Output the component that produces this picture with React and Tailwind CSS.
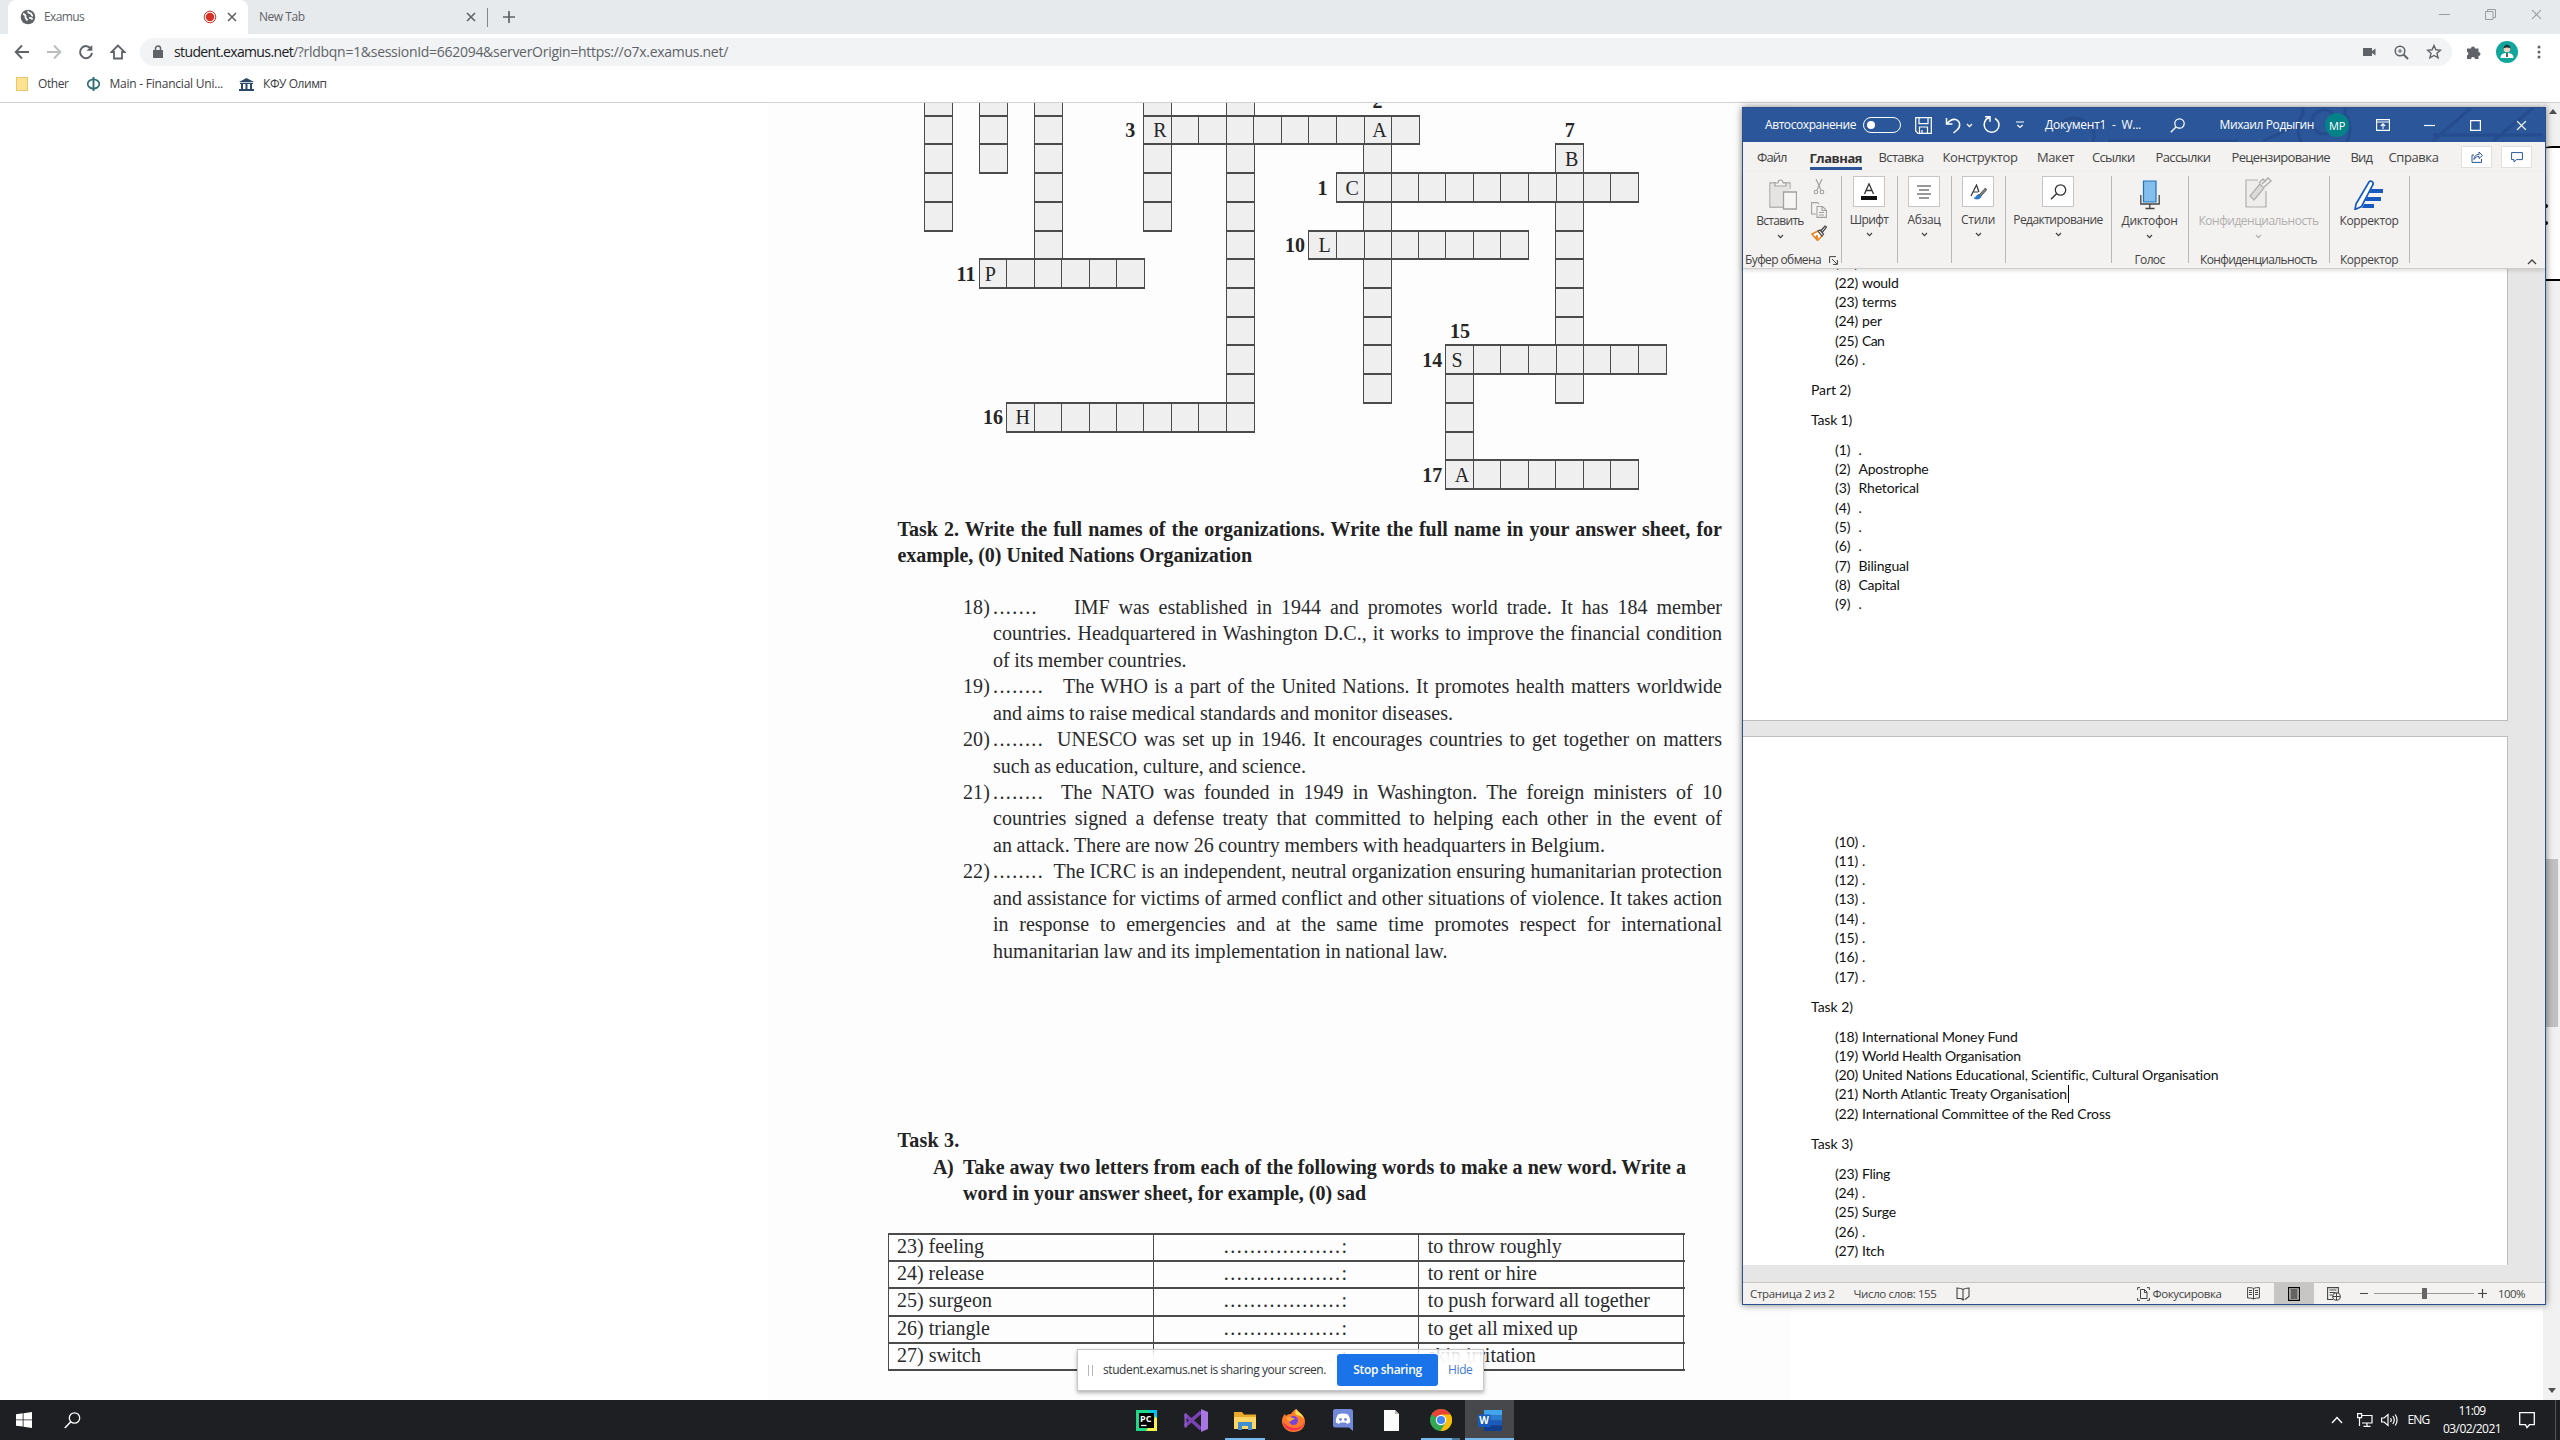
import { useLayoutEffect, useRef } from "react";

/* Text that is tracked in or out so that it fills exactly `w` pixels. */
function Fit({ w, className = "", children }) {
  const ref = useRef(null);
  useLayoutEffect(() => {
    const el = ref.current;
    el.style.letterSpacing = "0px";
    const natural = el.getBoundingClientRect().width;
    const n = Math.max(1, el.textContent.length);
    el.style.letterSpacing = (w - natural) / n + "px";
  }, [w, children]);
  return (
    <span className={"inline-block shrink-0 " + className} style={{ width: w }}>
      <span ref={ref} className="inline-block whitespace-pre">{children}</span>
    </span>
  );
}

function Svg({ w, h, vb, className = "", children }) {
  return (
    <svg width={w} height={h} viewBox={vb || `0 0 ${w} ${h}`} className={"block shrink-0 " + className} fill="none" stroke="currentColor">
      {children}
    </svg>
  );
}

const Close = ({ s = 10, className = "", sw = 1.6 }) => (
  <Svg w={s} h={s} vb="0 0 10 10" className={className}>
    <path d="M1 1 9 9M9 1 1 9" strokeWidth={sw} />
  </Svg>
);
const Caret = ({ className = "" }) => (
  <Svg w={7} h={5} className={className}>
    <path d="M1 1 3.5 3.7 6 1" strokeWidth="1.2" />
  </Svg>
);

/* ---------- browser ---------- */

function TabStrip() {
  return (
    <div className="flex h-[34px] bg-[#e7eaed] text-[12px] text-[#5f6368]">
      <div className="ml-2 flex h-full w-[240px] items-center rounded-t-lg bg-white">
        <Svg w={16} h={16} className="ml-[12px]">
          <circle cx="8" cy="8" r="7.3" fill="#5f6368" stroke="none" />
          <path d="M3 5c2 .3 3 1.500 2.500 3s1.500 1.500 1.800 3.500M8.500 2c-1 1.500.5 2.200 2 2.300s.5 2.500 2.500 2.500M9 9c2-.5 3 .5 3.500 1.500" stroke="#fff" strokeWidth="1.800" />
        </Svg>
        <Fit w={40} className="ml-[8px]">Examus</Fit>
        <Svg w={14} h={14} className="ml-[119px]">
          <circle cx="7" cy="7" r="5.800" stroke="#d93025" strokeWidth="1" />
          <circle cx="7" cy="7" r="4.200" fill="#d93025" stroke="none" />
        </Svg>
        <Close className="ml-[10px]" />
      </div>
      <div className="flex h-full w-[239px] items-center">
        <Fit w={45.500} className="ml-[11px]">New Tab</Fit>
        <Close className="ml-[161px]" />
      </div>
      <div className="mt-[8px] h-[19px] w-px bg-[#80868b]" />
      <Svg w={12} h={12} className="ml-[15px] mt-[11px]">
        <path d="M6 0v12M0 6h12" strokeWidth="1.700" />
      </Svg>
      <div className="ml-auto mr-[18px] flex items-center gap-[35px] pb-[6px] text-[#9a9da0]">
        <Svg w={11} h={11}><path d="M0 5.500h11" /></Svg>
        <Svg w={11} h={11}><path d="M.5 2.500h7.500v8h-7.500zM2.500 2.500v-2h8v8h-2.500" /></Svg>
        <Close s={11} sw={1} />
      </div>
    </div>
  );
}

function Toolbar() {
  return (
    <div className="flex h-[36px] items-center bg-white text-[#5f6368]">
      <Svg w={16} h={16} className="ml-[14px]"><path d="M15 8H2M8 1.500 1.700 8 8 14.500" strokeWidth="1.900" /></Svg>
      <Svg w={16} h={16} className="ml-[16px] text-[#babcbe]"><path d="M1 8h13M8 1.500 14.300 8 8 14.500" strokeWidth="1.900" /></Svg>
      <Svg w={16} h={16} className="ml-[16px]">
        <path d="M13.200 5A6 6 0 1 0 14 9" strokeWidth="2" />
        <path d="M14.300 1v5.800H8.500z" fill="currentColor" stroke="none" />
      </Svg>
      <Svg w={16} h={16} className="ml-[16px]"><path d="M8 1.500 1.500 8H4v6.500h8V8h2.500z" strokeWidth="1.800" /></Svg>
      <div className="ml-[14px] flex h-[28px] w-[2311.500px] items-center rounded-full bg-[#f1f3f4]">
        <Svg w={10} h={14} className="ml-[13px]">
          <path d="M0 5h10v8H0z" fill="currentColor" stroke="none" />
          <path d="M2.500 6V3.500a2.500 2.500 0 0 1 5 0V6" strokeWidth="1.500" />
        </Svg>
        <Fit w={119} className="mb-[2px] ml-[11px] text-[14px] text-[#202124]">student.examus.net</Fit>
        <Fit w={435} className="mb-[2px] text-[14px]">/?rldbqn=1&sessionId=662094&serverOrigin=https://o7x.examus.net/</Fit>
        <Svg w={13} h={10} className="ml-auto"><path d="M0 1h9v8H0zM9 4l3.500-2.500v7L9 6z" fill="currentColor" stroke="none" /></Svg>
        <Svg w={15} h={15} className="ml-[18px]">
          <circle cx="6" cy="6" r="4.800" strokeWidth="1.500" />
          <path d="M9.500 9.500 14 14" strokeWidth="2" />
          <path d="M3.800 6h4.400M6 3.800v4.400" strokeWidth="1" />
        </Svg>
        <Svg w={16} h={16} className="ml-[17px] mr-[10px]">
          <path d="m8 1.500 1.900 4.300 4.600.4-3.500 3.100 1.100 4.600L8 11.500l-4.100 2.400L5 9.300 1.500 6.200l4.600-.4z" strokeWidth="1.400" />
        </Svg>
      </div>
      <Svg w={16} h={16} className="ml-[14px]">
        <path d="M1 4.500h4a2 2 0 1 1 4 0h3.500V8a2 2 0 1 1 0 4v3H9a2 2 0 0 0-4 0H1v-3.500a2 2 0 0 0 0-3.800z" fill="currentColor" stroke="none" />
      </Svg>
      <Svg w={22} h={22} className="ml-[14px]">
        <circle cx="11" cy="11" r="11" fill="#12a59c" stroke="none" />
        <path d="M4.500 17c0-4 3-5 6.500-5s6.500 1 6.500 5z" fill="#fff" stroke="none" />
        <circle cx="11" cy="8" r="3.300" fill="#f3d3c0" stroke="none" />
        <path d="M7.500 7.500c0-5 7-5 7 0-2-1.500-5-1.500-7 0z" fill="#20303a" stroke="none" />
        <path d="M11 12v4" stroke="#20303a" strokeWidth="1.500" />
      </Svg>
      <Svg w={4} h={16} className="ml-[19px]">
        <g fill="currentColor" stroke="none"><circle cx="2" cy="3" r="1.500" /><circle cx="2" cy="8" r="1.500" /><circle cx="2" cy="13" r="1.500" /></g>
      </Svg>
    </div>
  );
}

function Bookmarks() {
  return (
    <div className="flex h-[33px] items-center border-b border-[#cfd1d4] bg-white pb-[4px] text-[12px] text-[#3c4043]">
      <div className="ml-[16px] h-[14px] w-[12px] border border-[#e8c766] bg-[#fde293]" />
      <Fit w={30.500} className="ml-[10px]">Other</Fit>
      <Svg w={15} h={14} className="ml-[17px] text-[#2f6f73]">
        <ellipse cx="7.500" cy="7" rx="5.800" ry="4.600" strokeWidth="1.700" />
        <path d="M7.500 0v14" strokeWidth="1.900" />
      </Svg>
      <Fit w={113.500} className="ml-[9px]">Main - Financial Uni...</Fit>
      <Svg w={15} h={13} className="ml-[16px] text-[#2b4a66]">
        <path d="M7.500 0 15 4H0zM1 4.800h13V6H1zM2 6h2v5H2zM6.500 6h2v5h-2zM11 6h2v5h-2zM0 11h15v2H0z" fill="currentColor" stroke="none" />
      </Svg>
      <Fit w={63.500} className="ml-[9px]">КФУ Олимп</Fit>
    </div>
  );
}

/* ---------- crossword ---------- */

const words = [
  { c: 0, r: -1, n: 5, down: true },
  { c: 2, r: -1, n: 3, down: true },
  { c: 4, r: -1, n: 7, down: true },
  { c: 8, r: -1, n: 5, down: true },
  { c: 11, r: -1, n: 12, down: true },
  { c: 16, r: 0, n: 10, down: true },
  { c: 23, r: 1, n: 9, down: true },
  { c: 19, r: 8, n: 5, down: true },
  { c: 8, r: 0, n: 10 },
  { c: 15, r: 2, n: 11 },
  { c: 14, r: 4, n: 8 },
  { c: 2, r: 5, n: 6 },
  { c: 19, r: 8, n: 8 },
  { c: 3, r: 10, n: 9 },
  { c: 19, r: 12, n: 7 },
];
const cells = new Map();
words.forEach(({ c, r, n, down }) => {
  for (let i = 0; i < n; i++) {
    const x = down ? c : c + i;
    const y = down ? r + i : r;
    cells.set(x + "," + y, { x, y });
  }
});
const letters = { "8,0": "R", "16,0": "A", "23,1": "B", "15,2": "C", "14,4": "L", "2,5": "P", "19,8": "S", "3,10": "H", "19,12": "A" };
const labels = [
  { x: 7, y: 0, t: "3" },
  { x: 14, y: 2, t: "1" },
  { x: 13, y: 4, t: "10" },
  { x: 1, y: 5, t: "11" },
  { x: 18, y: 8, t: "14" },
  { x: 2, y: 10, t: "16" },
  { x: 18, y: 12, t: "17" },
  { x: 16, y: -1, t: "2", above: true },
  { x: 23, y: 0, t: "7", above: true },
  { x: 19, y: 7, t: "15", above: true },
];

function Crossword() {
  return (
    <div className="-mt-[16px] ml-[36.600px] grid w-[741.400px] grid-cols-[repeat(27,27.460px)] grid-rows-[repeat(14,28.720px)] text-[20px] text-[#262626]">
      {[...cells.values()].map(({ x, y }) => {
        const letter = letters[x + "," + y];
        const nudged = letter === "P" || letter === "S";
        return (
          <div
            key={x + "," + y}
            className={
              "-mx-[0.800px] -my-[1px] flex items-center border-x-[1.600px] border-y-2 border-[#4c4b4c] bg-[#f0eff0] leading-none " +
              (nudged ? "justify-start pl-[5px]" : "justify-center pl-[4px]")
            }
            style={{ gridColumn: x + 1, gridRow: y + 2 }}
          >
            {letter}
          </div>
        );
      })}
      {labels.map(({ x, y, t, above }) => (
        <div
          key={t}
          className={
            "flex items-center font-bold leading-none " +
            (above ? "justify-center" : t.length === 1 ? "justify-end pr-[9px]" : "justify-end pr-[4px]")
          }
          style={{ gridColumn: x + 1, gridRow: y + 2 }}
        >
          {t}
        </div>
      ))}
    </div>
  );
}

/* ---------- exam sheet ---------- */

const orgs = [
  ["18)", ".......", 36, "IMF was established in 1944 and promotes world trade. It has 184 member", [["countries. Headquartered in Washington D.C., it works to improve the financial condition", 729], ["of its member countries.", 193.5]]],
  ["19)", "........", 19, "The WHO is a part of the United Nations. It promotes health matters worldwide", [["and aims to raise medical standards and monitor diseases.", 460]]],
  ["20)", "........", 13, "UNESCO was set up in 1946. It encourages countries to get together on matters", [["such as education, culture, and science.", 313]]],
  ["21)", "........", 17, "The NATO was founded in 1949 in Washington. The foreign ministers of 10", [["countries signed a defense treaty that committed to helping each other in the event of", 729], ["an attack. There are now 26 country members with headquarters in Belgium.", 612]]],
  ["22)", "........", 9.5, "The ICRC is an independent, neutral organization ensuring humanitarian protection", [["and assistance for victims of armed conflict and other situations of violence. It takes action", 729], ["in response to emergencies and at the same time promotes respect for international", 729], ["humanitarian law and its implementation in national law.", 454.5]]],
];
const tableRows = [
  ["23) feeling", 87, "to throw roughly", 134],
  ["24) release", 87, "to rent or hire", 109],
  ["25) surgeon", 95, "to push forward all together", 222],
  ["26) triangle", 93, "to get all mixed up", 150],
  ["27) switch", 84, "skin irritation", 108],
];

function Sheet() {
  return (
    <div className="ml-[888px] h-full w-[903px] overflow-hidden font-['Liberation_Serif',serif] text-[20px] leading-[26.440px] text-[#2a2a2c]">
      <Crossword />
      <div className="ml-[9.500px] mt-[26.500px] w-[824.500px] font-bold text-[#222]">
        <p className="[text-align-last:justify] whitespace-nowrap">Task 2. Write the full names of the organizations. Write the full name in your answer sheet, for</p>
        <Fit w={354.500}>example, (0) United Nations Organization</Fit>
      </div>
      <div className="ml-[75px] mt-[25.500px] w-[759px] [word-spacing:-0.500px]">
        {orgs.map(([num, dots, gap, first, rest]) => (
          <div key={num}>
            <div className="flex">
              <Fit w={27} className="mr-[3px]">{num}</Fit>
              <Fit w={dots.length === 7 ? 45 : 51}>{dots}</Fit>
              <p className="flex-1 whitespace-nowrap [text-align-last:justify]" style={{ marginLeft: gap }}>{first}</p>
            </div>
            {rest.map(([line, w]) =>
              w === 729 ? (
                <p key={line} className="ml-[30px] whitespace-nowrap [text-align-last:justify]">{line}</p>
              ) : (
                <div key={line} className="ml-[30px]"><Fit w={w}>{line}</Fit></div>
              )
            )}
          </div>
        ))}
      </div>
      <div className="ml-[9.500px] mt-[163px] font-bold text-[#222]">
        <div><Fit w={62}>Task 3.</Fit></div>
        <div className="flex pl-[35.500px]">
          <Fit w={20} className="mr-[10px]">A)</Fit>
          <Fit w={723}>Take away two letters from each of the following words to make a new word. Write a</Fit>
        </div>
        <div className="pl-[65.500px]"><Fit w={403}>word in your answer sheet, for example, (0) sad</Fit></div>
      </div>
      <div className="mt-[26.500px] w-[796.500px] border-l-[1.500px] border-t-2 border-[#4c4b4c]">
        {tableRows.map(([a, aw, b, bw]) => (
          <div key={a} className="grid h-[27.300px] grid-cols-3 border-b-2 border-[#4c4b4c] leading-[23.500px]">
            <div className="border-r-[1.500px] border-[#4c4b4c] pl-[8px]"><Fit w={aw}>{a}</Fit></div>
            <div className="border-r-[1.500px] border-[#4c4b4c] text-center"><Fit w={125}>..................:</Fit></div>
            <div className="border-r-[1.500px] border-[#4c4b4c] pl-[8.500px]"><Fit w={bw}>{b}</Fit></div>
          </div>
        ))}
      </div>
    </div>
  );
}

function ShareBar() {
  return (
    <div className="absolute left-[1077px] top-[1349px] flex h-[42px] w-[407px] items-center border border-[#c4c6c9] bg-[linear-gradient(to_bottom,rgba(255,255,255,0.75)_0px,rgba(255,255,255,0.94)_6px,#ffffff_20px)] text-[12px] text-[#333639] shadow-[0_2px_4px_rgba(0,0,0,0.3)]">
      <div className="ml-[10px] h-[11px] w-[5px] border-x border-[#b4b6b9]" />
      <Fit w={223} className="ml-[10px]">student.examus.net is sharing your screen.</Fit>
      <div className="ml-[11px] flex h-[32px] w-[101px] items-center justify-center rounded-[3px] bg-[#1a73e8] font-semibold text-white">
        <Fit w={68.500}>Stop sharing</Fit>
      </div>
      <Fit w={24.500} className="ml-[10px] text-[#3f7ad6]">Hide</Fit>
    </div>
  );
}

/* ---------- Word window ---------- */

function TitleBar() {
  return (
    <div className="relative flex h-[34px] items-center bg-[#2b579a] text-[12px] text-white">
      <Svg w={801} h={34} className="absolute left-0 top-0 text-[#24498a]">
        <g strokeWidth="3" opacity="0.75">
          <path d="M312 16h50M312 22a18 16 0 0 1 38 12M365 33h130M520 33l30-14M560 0v6a26 26 0 1 0 42 0V0M690 33l38-33M750 33l40-33M690 27h110" />
          <circle cx="581" cy="14" r="12" />
        </g>
      </Svg>
      <div className="relative flex h-full w-full items-center">
        <Fit w={91} className="ml-[22px]">Автосохранение</Fit>
        <div className="ml-[7px] flex h-[16px] w-[38px] items-center rounded-full border-[1.500px] border-white pl-[3px]">
          <div className="h-[8px] w-[8px] rounded-full bg-white" />
        </div>
        <Svg w={17} h={17} className="ml-[14px]">
          <path d="M.7.7h15.600v15.600H3L.7 14zM4 .7v6h9v-6M4.500 16v-6h8v6M7 16v-3" strokeWidth="1.200" />
        </Svg>
        <Svg w={16} h={17} className="ml-[13px]">
          <path d="M1.500 1v6h6M1.800 6.800C5 3 8 2 10.500 2.500c5 1.500 5.500 7 1.500 10.500L8.500 16" strokeWidth="1.500" />
        </Svg>
        <Caret className="ml-[5px]" />
        <Svg w={17} h={18} className="ml-[10px]">
          <path d="M2 .8h5v5M6.500 1.500C1 3 .5 9 2 12c3 5.500 10.500 5.500 13.300 0 1.500-4 0-7.500-3.300-9.500" strokeWidth="1.500" />
        </Svg>
        <Svg w={8} h={8} className="ml-[16px]"><path d="M0 1h8M1.300 4 4 6.500 6.700 4" strokeWidth="1.200" /></Svg>
        <Fit w={96} className="ml-[21px]">Документ1  -  W...</Fit>
        <Svg w={15} h={15} className="ml-[28.500px]"><circle cx="9.500" cy="5.500" r="4.700" strokeWidth="1.200" /><path d="M6 9 .8 14.200" strokeWidth="1.300" /></Svg>
        <Fit w={94.500} className="ml-[35px]">Михаил Родыгин</Fit>
        <div className="ml-[11px] flex h-[24px] w-[24px] items-center justify-center rounded-full bg-[#038387] text-[11px] leading-none"><Fit w={16}>МР</Fit></div>
        <Svg w={14} h={12} className="ml-[27px]"><path d="M.6.6h12.800v10.800H.6zM.6 3h12.800M7 10V5M4.800 7 7 4.800 9.200 7" strokeWidth="1.100" /></Svg>
        <Svg w={11} h={11} className="ml-[34px]"><path d="M0 5.500h11" strokeWidth="1.200" /></Svg>
        <Svg w={11} h={11} className="ml-[35px]"><path d="M.6.6h9.800v9.800H.6z" strokeWidth="1.200" /></Svg>
        <Close s={11} sw={1.200} className="ml-[35px]" />
      </div>
    </div>
  );
}

function RibbonTabs() {
  return (
    <div className="flex h-[30px] items-center text-[13px] leading-[18px] text-[#444]">
      <Fit w={29.500} className="ml-[14px]">Файл</Fit>
      <div className="ml-[23px] flex h-[25px] items-center border-b-[3px] border-[#2b579a] font-bold text-[#333]"><Fit w={52.500} className="pt-[4px]">Главная</Fit></div>
      <Fit w={45} className="ml-[16.500px]">Вставка</Fit>
      <Fit w={75} className="ml-[19px]">Конструктор</Fit>
      <Fit w={37} className="ml-[19.500px]">Макет</Fit>
      <Fit w={42.500} className="ml-[18px]">Ссылки</Fit>
      <Fit w={55} className="ml-[21px]">Рассылки</Fit>
      <Fit w={98.500} className="ml-[21px]">Рецензирование</Fit>
      <Fit w={21.500} className="ml-[20.500px]">Вид</Fit>
      <Fit w={50} className="ml-[16.500px]">Справка</Fit>
      <div className="ml-[22.500px] flex h-[22px] w-[31px] items-center justify-center border border-[#e1dfdd] bg-white text-[#2b579a]">
        <Svg w={12} h={12}><path d="M3 4H1v7.400h9.500V8M3 8.500C3 5 5 3.500 8 3.500V1l3.400 3.500L8 7.500V5.500C6 5.500 4.500 6 3 8.500z" strokeWidth="1" /></Svg>
      </div>
      <div className="ml-[9px] flex h-[22px] w-[31px] items-center justify-center border border-[#e1dfdd] bg-white text-[#2b579a]">
        <Svg w={12} h={11}><path d="M.6.6h10.800v7H5.500L3 10V7.600H.6z" strokeWidth="1" /></Svg>
      </div>
    </div>
  );
}

function BoxGroup({ label, w, icon, className }) {
  return (
    <div className={"flex flex-col items-center border-r border-[#b9b7b5] " + className}>
      <div className="flex h-[31px] w-[32px] items-center justify-center border border-[#c8c6c4] bg-white text-[#333]">{icon}</div>
      <Fit w={w} className="mt-[4px] leading-[18px]">{label}</Fit>
      <Caret className="mt-[3px]" />
    </div>
  );
}

function BigGroup({ label, w, caption, cw, icon, caret, dim, className }) {
  return (
    <div className={"flex flex-col items-center border-r border-[#b9b7b5] " + className}>
      <div className={"flex flex-col items-center " + (dim ? "text-[#b1afad]" : "")}>
        <div className="flex h-[34px] items-end">{icon}</div>
        <Fit w={w} className="mt-[2px] leading-[18px]">{label}</Fit>
        {caret && <Caret className="mt-[4px]" />}
      </div>
      <Fit w={cw} className="mb-[-6px] mt-auto leading-[18px]">{caption}</Fit>
    </div>
  );
}

function Ribbon() {
  return (
    <div className="flex h-[97px] border-b border-[#cfcdcb] pb-[5px] pt-[4px] text-[12px] text-[#444] shadow-[0_2px_4px_rgba(0,0,0,0.12)]">
      <div className="flex w-[98.500px] flex-col justify-between border-r border-[#b9b7b5]">
        <div className="flex">
          <div className="ml-[13px] flex w-[48px] flex-col items-center pt-[3px]">
            <Svg w={28} h={31} className="ml-[6px] text-[#a3a1a0]">
              <path d="M7 4H1v24h13M21 10V4h-6" strokeWidth="1.300" />
              <path d="M1.500 4.500h19v8h-6v15h-13z" fill="#e6e4e3" stroke="none" />
              <path d="M6 7V4h3c0-4 5-4 5 0h3v3z" fill="#f3f2f1" strokeWidth="1.200" />
              <path d="M14.500 13h13v17h-13z" fill="#f6f5f4" strokeWidth="1.300" />
            </Svg>
            <Fit w={47.500} className="mt-[2px] leading-[18px]">Вставить</Fit>
            <Caret className="mt-[4px]" />
          </div>
          <div className="ml-[7px] flex flex-col items-center gap-[7px] pt-[3px]">
            <Svg w={12} h={16} className="text-[#a3a1a0]"><path d="M3 0l5 11M9 0 4 11" strokeWidth="1.200" /><circle cx="3" cy="13" r="1.800" strokeWidth="1.100" /><circle cx="9" cy="13" r="1.800" strokeWidth="1.100" /></Svg>
            <Svg w={16} h={16} className="text-[#a3a1a0]"><path d="M5 12H.6V.6h6l1.500 1.500M6 4.500h5.500l3.900 3.800v7.100H6zM11 4.500v4h4M8 10.500h5M8 13h5" strokeWidth="1.100" /></Svg>
            <Svg w={16} h={16}>
              <path d="M1 9l6-3 4 5-4.500 4.500z" fill="#fff" stroke="#e8821e" strokeWidth="1.500" />
              <path d="M4 13l2-3 1 4" fill="#e8821e" stroke="#e8821e" />
              <path d="M7 6l2-1 3.500 4-1.500 2zM10 5.500l4-4.500 1.500 1.200-4 4.800" fill="#fff" stroke="#444" strokeWidth="1.200" />
            </Svg>
          </div>
        </div>
        <div className="mb-[-6px] flex items-center">
          <Fit w={76} className="ml-[2px] leading-[18px]">Буфер обмена</Fit>
          <Svg w={9} h={9} className="ml-[8px]"><path d="M.6 7V.6H7M3 3l5 5M8.400 4v4.400H4" strokeWidth="1" /></Svg>
        </div>
      </div>
      <BoxGroup className="w-[56px]" label="Шрифт" w={38.500} icon={
        <Svg w={16} h={17}><path d="M3.500 11 8 .8 12.500 11M5.200 7.500h5.600" strokeWidth="1.300" /><path d="M0 13h16v4H0z" fill="#111" stroke="none" /></Svg>
      } />
      <BoxGroup className="w-[54px]" label="Абзац" w={33} icon={
        <Svg w={14} h={14}><path d="M0 1h14M2 5h10M0 9h14M2 13h10" strokeWidth="1.200" /></Svg>
      } />
      <BoxGroup className="w-[54px]" label="Стили" w={34} icon={
        <Svg w={17} h={16}><path d="M1 12 6.500 1 9 8M3.500 8H8" strokeWidth="1.200" /><path d="M15.500 4 9 11l1.500 1.500L16.500 6z" fill="#888" strokeWidth=".8" /><path d="M4 14c2.500 0 2-3.500 5-3.500l2 2c0 2.500-5 3.500-7 1.500z" fill="#2b7cd3" stroke="#1e5fa8" strokeWidth=".6" /></Svg>
      } />
      <BoxGroup className="w-[106px]" label="Редактирование" w={89.500} icon={
        <Svg w={17} h={16}><circle cx="10.500" cy="6" r="5.200" strokeWidth="1.300" /><path d="M6.500 9.800 1 15.300" strokeWidth="1.400" /></Svg>
      } />
      <BigGroup className="w-[77px]" label="Диктофон" w={56} caption="Голос" cw={30} caret icon={
        <Svg w={20} h={30} className="text-[#444]"><path d="M3.500 1h12.500v21H3.500z" fill="#83beec" stroke="#1e72c0" strokeWidth="1.200" /><path d="M.8 15v9h18.400v-9M9.800 24v4M5.500 28.500h9" strokeWidth="1.300" /></Svg>
      } />
      <BigGroup className="w-[141px]" label="Конфиденциальность" w={120} caption="Конфиденциальность" cw={117} caret dim icon={
        <Svg w={28} h={32} className="mb-[1px]"><path d="M13 3H1v27h20V14" strokeWidth="1.200" fill="#eeedec" /><path d="M5 19 15 7l4 4L9 23z" fill="#dddbda" strokeWidth="1.200" /><path d="M14 6l4-4 3 3M19 10l7-6-3-3-6 6" strokeWidth="1.500" /></Svg>
      } />
      <BigGroup className="w-[80px]" label="Корректор" w={59} caption="Корректор" cw={58} icon={
        <Svg w={30} h={31} className="text-[#185abd]"><path d="M2 25 15 3c1.500-2 5 0 4 2.500L7.500 27.500 1 30.500z" fill="#fff" strokeWidth="1.700" /><path d="M17 10h12v4H15zM13 18h14v4H11zM10 25h10v4H8z" fill="currentColor" stroke="none" /></Svg>
      } />
      <Svg w={10} h={6} className="ml-auto mr-[8px] mt-[83px]"><path d="M1 5 5 1l4 4" strokeWidth="1.300" /></Svg>
    </div>
  );
}

function List({ items, className = "" }) {
  return (
    <div className={"pl-[24px] " + className}>
      {items.map(([n, t, w]) => (
        <div key={n} className="flex h-[19.300px] items-center">
          <Fit w={n.length > 3 ? 23 : 15.500}>{n}</Fit>
          {w ? (
            <Fit w={w} className={n.length > 3 ? "ml-[4px]" : "ml-[8px]"}>{t}</Fit>
          ) : (
            <span className={n.length > 3 ? "ml-[4px]" : "ml-[8px]"}>{t}</span>
          )}
          {n === "(21)" && w && <span className="h-[18px] w-px bg-black" />}
        </div>
      ))}
    </div>
  );
}
const Heading = ({ w, children }) => (
  <div className="flex h-[19.300px] items-center"><Fit w={w}>{children}</Fit></div>
);

function Document() {
  return (
    <div className="h-[1013px] overflow-hidden bg-[#e6e6e6] font-['Lato','Noto_Sans',sans-serif] text-[14px] leading-[19.300px] text-[#111]">
      <div className="flex h-[452px] w-[764.500px] flex-col gap-[10.700px] border-b border-r border-[#bdbdbd] bg-white pl-[68px]">
        <List className="-mt-[15.700px]" items={[["(21)", "."], ["(22)", "would", 36.5], ["(23)", "terms", 34.5], ["(24)", "per", 20], ["(25)", "Can", 22], ["(26)", "."]]} />
        <Heading w={40}>Part 2)</Heading>
        <Heading w={41}>Task 1)</Heading>
        <List items={[["(1)", "."], ["(2)", "Apostrophe", 70], ["(3)", "Rhetorical", 60.5], ["(4)", "."], ["(5)", "."], ["(6)", "."], ["(7)", "Bilingual", 50.5], ["(8)", "Capital", 41], ["(9)", "."]]} />
      </div>
      <div className="mt-[15px] flex h-[529px] w-[764.500px] flex-col gap-[10.700px] border-r border-t border-[#bdbdbd] bg-white pl-[68px] pt-[94.500px]">
        <List items={["(10)", "(11)", "(12)", "(13)", "(14)", "(15)", "(16)", "(17)"].map((n) => [n, "."])} />
        <Heading w={42}>Task 2)</Heading>
        <List items={[["(18)", "International Money Fund", 156], ["(19)", "World Health Organisation", 159], ["(20)", "United Nations Educational, Scientific, Cultural Organisation", 357], ["(21)", "North Atlantic Treaty Organisation", 205.5], ["(22)", "International Committee of the Red Cross", 248.5]]} />
        <Heading w={42}>Task 3)</Heading>
        <List items={[["(23)", "Fling", 28], ["(24)", "."], ["(25)", "Surge", 34], ["(26)", "."], ["(27)", "Itch", 22.5]]} />
      </div>
    </div>
  );
}

function StatusBar() {
  return (
    <div className="flex h-[22px] items-center border-t border-[#c6c6c6] bg-[#f3f2f1] text-[11.500px] text-[#444]">
      <Fit w={84.500} className="ml-[7px]">Страница 2 из 2</Fit>
      <Fit w={83} className="ml-[19px]">Число слов: 155</Fit>
      <Svg w={14} h={14} className="ml-[19px]"><path d="M7 2.500v9.500M7 2.500C5 1 3 1 1 1v10.500h4L7 13l1-1M7 2.500C9 1 11 1 13 1v8.500l-4 3" strokeWidth="1.100" /></Svg>
      <Svg w={13} h={14} className="ml-[167px]"><path d="M3 .6H.6V3M10 .6h2.400V3M.6 11v2.400H3M12.400 11v2.400H10M3.500 2.500h4l2.500 2.500v6.500H3.500zM7.500 2.500v3h2.500" strokeWidth="1" /></Svg>
      <Fit w={69} className="ml-[3px]">Фокусировка</Fit>
      <Svg w={13} h={13} className="ml-[25px]"><path d="M6.500 1.500v10.500M6.500 1.500C5 .6 3 .6.600.6V11c2 0 4 0 5.900 1 2-1 4-1 5.900-1V.6c-2 0-4 0-5.900.9M2 3.500h3M2 5.500h3M2 7.500h3M8 3.500h3M8 5.500h3M8 7.500h3" strokeWidth="1" /></Svg>
      <div className="ml-[14.500px] flex h-full w-[40px] items-center justify-center bg-[#c8c6c4] text-black">
        <Svg w={12} h={14}><path d="M.6.6h10.800v12.800H.6zM2.500 3h7M2.500 5h7M2.500 7h7M2.500 9h7M2.500 11h7" strokeWidth="1.100" /></Svg>
      </div>
      <Svg w={14} h={14} className="ml-[13px]"><path d="M6 12.500H.6V.6h10.800V6M2.500 3h7M2.500 5.500h6M2.500 8h3" strokeWidth="1.100" /><circle cx="9.500" cy="9.500" r="3.800" strokeWidth="1.100" /><path d="M6 9.500h7M9.500 6v7" strokeWidth="1" /></Svg>
      <div className="ml-[18.500px] h-[1.500px] w-[8px] bg-[#444]" />
      <div className="ml-[6px] flex h-[12px] w-[100px] items-center">
        <div className="h-px w-[48px] bg-[#999]" />
        <div className="h-[11px] w-[5px] bg-[#666]" />
        <div className="h-px w-[47px] bg-[#999]" />
      </div>
      <Svg w={9} h={9} className="ml-[4px]"><path d="M0 4.500h9M4.500 0v9" strokeWidth="1.200" /></Svg>
      <Fit w={27} className="ml-[11.500px]">100%</Fit>
    </div>
  );
}

function WordWindow() {
  return (
    <div className="absolute left-[1742px] top-[107px] flex h-[1198px] w-[804px] flex-col border-x border-b-[1.500px] border-t border-[#2b4f8f] bg-[#f3f2f1] shadow-[0_0_7px_rgba(0,0,0,0.5)]">
      <TitleBar />
      <RibbonTabs />
      <div className="relative z-10 bg-[#f3f2f1]"><Ribbon /></div>
      <Document />
      <StatusBar />
    </div>
  );
}

/* ---------- taskbar ---------- */

function Slot({ children, active, mark }) {
  return (
    <div className={"flex h-full w-[49px] flex-col items-center " + (active ? "bg-[#47484b]" : "")}>
      <div className="flex h-[38px] items-center pt-[2px]">{children}</div>
      {mark}
    </div>
  );
}

function Taskbar() {
  return (
    <div className="flex h-[40px] items-center bg-[#1e1f23] text-[12px] text-white">
      <Svg w={16} h={16} className="ml-[16px]"><path d="M0 2.300 6.700 1.300v6.200H0zM7.500 1.200 16 0v7.500H7.500zM0 8.300h6.700v6.300L0 13.700zM7.500 8.300H16V16l-8.500-1.200z" fill="#fff" stroke="none" /></Svg>
      <Svg w={17} h={17} className="ml-[32px]"><circle cx="10.500" cy="6" r="5.200" strokeWidth="1.300" /><path d="M6.800 9.800.8 16" strokeWidth="1.500" /></Svg>
      <div className="ml-[1041px] flex h-full">
        <Slot>
          <Svg w={21} h={21}>
            <path d="M0 0h21v21H0z" fill="#21d789" stroke="none" /><path d="M21 4v17H10z" fill="#f6f04a" stroke="none" /><path d="M12 0h9v8z" fill="#07c3f2" stroke="none" />
            <path d="M3 3h15v15H3z" fill="#000" stroke="none" /><path d="M5 15.500h5.500" stroke="#fff" strokeWidth="1.300" />
            <text x="4" y="11.800" fontSize="9" fontWeight="700" fill="#fff" stroke="none" fontFamily="Open Sans, sans-serif">PC</text>
          </Svg>
        </Slot>
        <Slot>
          <Svg w={24} h={23}><path d="M1 5.500 17 20M1 17 17 3" stroke="#7b42b5" strokeWidth="3.500" /><path d="M1.500 4.500v14" stroke="#8e5bc9" strokeWidth="2" /><path d="M17 0l7 3v17l-7 3z" fill="#a776e0" stroke="none" /></Svg>
        </Slot>
        <Slot mark={<div className="h-[2px] w-[40px] bg-[#76b9ed]" />}>
          <Svg w={22} h={19}><path d="M0 1h8l2 2.500h12V18H0z" fill="#e9a92b" stroke="none" /><path d="M0 6h22v12H0z" fill="#ffd566" stroke="none" /><path d="M4 19v-8h14v8h-4v-4H8v4z" fill="#3f8fd0" stroke="none" /></Svg>
        </Slot>
        <Slot>
          <Svg w={23} h={23}>
            <path d="M14 0c2 2 3 3 4 4 3 2 5 5 5 8.500C23 19 18 23 11.500 23S0 18 0 12c0-3 1-5 3-7l1 2c2-2 4-2 5-2 1-2 3-4 5-5z" fill="#ff7b2c" stroke="none" />
            <path d="M14 0c2 3 7 5 8 10-2-3-6-4-8-4-1-2-1-4 0-6z" fill="#ffe14d" stroke="none" /><path d="M1 13c1 7 8 10 14 8 5-1 8-6 7.500-9-1 4-4 7-9 7-7 0-9-3-12.500-6z" fill="#f5344d" stroke="none" />
            <circle cx="11.500" cy="11.500" r="4.500" fill="#7845d6" stroke="none" /><path d="M5 8c3-1 5 1 6 1l2 .5c-2 2-4 1-4 3-3 0-5-2-4-4.500z" fill="#ffa436" stroke="none" />
          </Svg>
        </Slot>
        <Slot>
          <Svg w={20} h={22}><path d="M2.500 0h15Q20 0 20 2.500V22l-4-3.500H2.500Q0 18.500 0 16V2.500Q0 0 2.500 0z" fill="#7289da" stroke="none" /><path d="M5 5.500c3-1.500 7-1.500 10 0 2 3 2.500 6 2 8l-3 1.500-1-1.500H7L6 15l-3-1.500c-.5-2 0-5 2-8z" fill="#fff" stroke="none" /><circle cx="7.500" cy="10.500" r="1.400" fill="#7289da" stroke="none" /><circle cx="12.500" cy="10.500" r="1.400" fill="#7289da" stroke="none" /></Svg>
        </Slot>
        <Slot>
          <Svg w={15} h={21}><path d="M0 0h11l4 4v17H0z" fill="#fbfbfb" stroke="none" /><path d="M11 0v4h4z" fill="#b5b5b5" stroke="none" /></Svg>
        </Slot>
        <Slot mark={<div className="flex h-[2px] w-[39px] self-center"><div className="w-[32px] bg-[#76b9ed]" /><div className="w-[8px] bg-[#4b7898]" /></div>}>
          <Svg w={22} h={22}>
            <circle cx="11" cy="11" r="11" fill="#34a853" stroke="none" /><path d="M11 11 1.500 5.500A11 11 0 0 1 20.500 5.500z" fill="#ea4335" stroke="none" /><path d="M11 5.500h9.600A11 11 0 0 1 10.500 22L15.800 13.500z" fill="#fbbc05" stroke="none" />
            <circle cx="11" cy="11" r="5.200" fill="#fff" stroke="none" /><circle cx="11" cy="11" r="4.100" fill="#4285f4" stroke="none" />
          </Svg>
        </Slot>
        <Slot active mark={<div className="h-[2px] w-full bg-[#76b9ed]" />}>
          <Svg w={24} h={21}>
            <path d="M6 0h18v5.500H6z" fill="#41a5ee" stroke="none" /><path d="M6 5.500h18v5H6z" fill="#2b7cd3" stroke="none" /><path d="M6 10.500h18v5H6z" fill="#185abd" stroke="none" /><path d="M6 15.500h18V21H6z" fill="#103f91" stroke="none" />
            <path d="M0 4.500h12.500v12.500H0z" fill="#185abd" stroke="none" />
            <text x="1.200" y="14.300" fontSize="10" fontWeight="700" fill="#fff" stroke="none" fontFamily="Open Sans, sans-serif">W</text>
          </Svg>
        </Slot>
      </div>
      <Svg w={12} h={8} className="ml-auto"><path d="M1 7l5-5.500L11 7" strokeWidth="1.400" /></Svg>
      <Svg w={16} h={14} className="ml-[14px]"><path d="M5 2.500h10v7.500H5M10 10v3M6.500 13.300h7M.6.600h4v4h-4zM2.500 5v8" strokeWidth="1.200" /></Svg>
      <Svg w={17} h={14} className="ml-[8px]"><path d="M.6 5h2.500L7 1.500v11L3.100 9H.6zM9.500 5q1.500 2 0 4M11.800 3q3 4 0 8M14.200 1.500q3.800 5.500 0 11" strokeWidth="1.200" /></Svg>
      <Fit w={22} className="ml-[9.500px]">ENG</Fit>
      <div className="ml-[13.500px] flex w-[58px] flex-col items-center leading-[18px]">
        <Fit w={27}>11:09</Fit>
        <Fit w={58}>03/02/2021</Fit>
      </div>
      <Svg w={16} h={17} className="ml-[18px]"><path d="M.7.700h14.600v12H10.500L8 15.500 6.500 12.700H.7z" strokeWidth="1.300" /></Svg>
      <div className="ml-[20px] mr-[4px] h-full w-px bg-[#55565a]" />
    </div>
  );
}

export default function App() {
  return (
    <div className="relative flex h-[1440px] w-[2560px] flex-col overflow-hidden bg-white font-['Open_Sans','Noto_Sans',sans-serif]">
      <TabStrip />
      <Toolbar />
      <Bookmarks />
      <div className="flex h-[1297px]">
        <div className="h-full w-[1791px] bg-[linear-gradient(to_right,#ffffff_768px,#fdfdfe_768px)]"><Sheet /></div>
        <div className="flex-1" />
        <div className="flex w-[17px] flex-col items-center bg-[#f1f1f1]">
          <Svg w={8} h={5} className="ml-[2px] mt-[6px]"><path d="M0 5 4 0l4 5z" fill="#505050" stroke="none" /></Svg>
          <div className="mt-[32px] flex h-[135px] w-full flex-col gap-[13px] border-y-2 border-black bg-white pl-[1px] pt-[56px] [border-top-left-radius:10px_3px]">
            <div className="h-[4px] w-[4px] rounded-full bg-black" />
            <div className="h-[4px] w-[4px] rounded-full bg-black" />
          </div>
          <div className="mt-[578px] h-[168px] w-[13px] bg-[#c1c1c1]" />
          <Svg w={8} h={5} className="mb-[7px] mt-auto"><path d="M0 0h8L4 5z" fill="#505050" stroke="none" /></Svg>
        </div>
      </div>
      <Taskbar />
      <ShareBar />
      <WordWindow />
    </div>
  );
}
